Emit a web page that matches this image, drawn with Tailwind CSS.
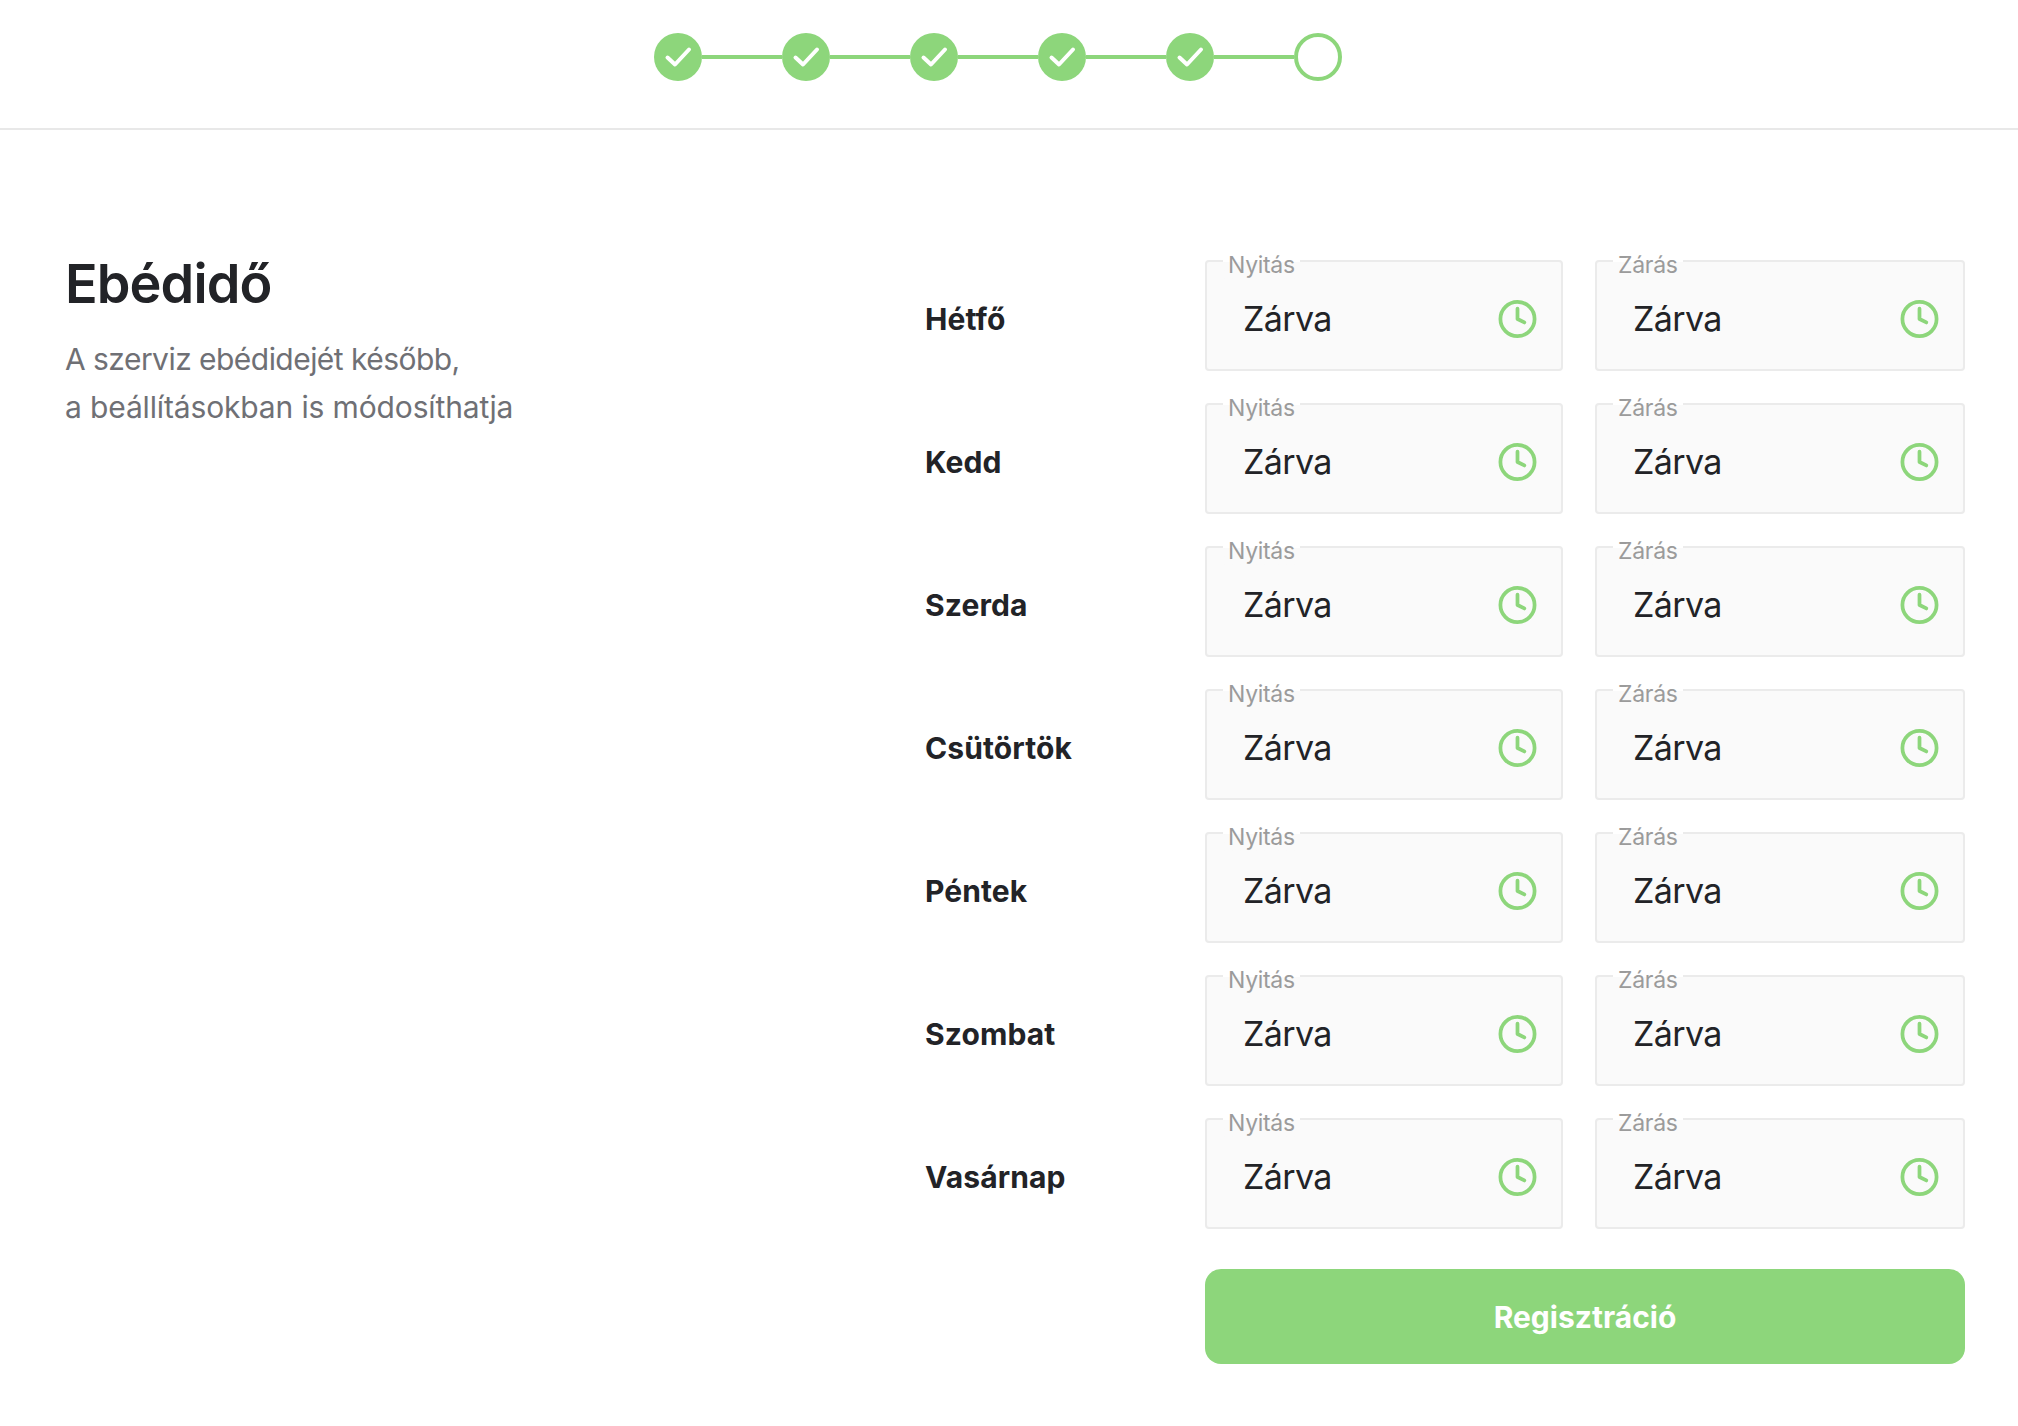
<!DOCTYPE html>
<html lang="hu">
<head>
  <meta charset="UTF-8">
  <title>Ebédidő</title>
  <meta name="viewport" content="width=device-width, initial-scale=1">
  <script src="https://cdn.jsdelivr.net/npm/@tailwindcss/browser@4"></script>
</head>
<body class="min-h-screen bg-white text-[#222327] font-[Inter,sans-serif]">
  <!-- stepper -->
  <header id="steps" class="h-[130px] pt-[33px] pr-[22px] border-b-2 border-[#e8e8e8] flex justify-center items-start"></header>

  <main class="flex justify-between pl-[65px] pr-[53px] pt-[130px]">
    <!-- left text -->
    <div>
      <h1 class="text-[54px] leading-[64px] font-semibold -tracking-[0.9px] -mt-[8px]">Ebédidő</h1>
      <p class="mt-[20px] text-[30px] leading-[47.5px] text-[#6f7075]">
        <span class="block -tracking-[0.54px]">A szerviz ebédidejét később,</span>
        <span class="block -tracking-[0.14px]">a beállításokban is módosíthatja</span>
      </p>
    </div>

    <!-- opening hours -->
    <div class="w-[1040px]">
      <div id="days" class="flex flex-col gap-[32px]"></div>
      <div class="flex mt-[40px]">
        <button class="ml-[280px] w-[760px] h-[95px] pt-[2px] rounded-[16px] bg-[#8dd67b] text-white text-[30px] font-bold">Regisztráció</button>
      </div>
    </div>
  </main>

  <script>
    const clock = `<svg class="absolute top-1/2 -translate-y-1/2 mt-[3px] right-[23px] w-[41px] h-[41px]" viewBox="0 0 24 24" fill="none" stroke="#8dd67b" stroke-width="2.2" stroke-linecap="round" stroke-linejoin="round"><circle cx="12" cy="12" r="10"/><polyline points="12 6 12 12 16 14"/></svg>`;

    function field(label, width) {
      return `
        <div class="relative ${width} h-[111px] shrink-0 rounded-[4px] border-2 border-[#ebebeb] bg-[#fafafa] flex items-center pl-[36px] pt-[7px]">
          <span class="absolute left-[16px] -top-[11px] px-[5px] text-[23px] leading-[28px] -tracking-[0.3px] text-[#9b9b9b] bg-linear-to-b from-white from-[11px] to-[#fafafa] to-[11px]">${label}</span>
          <span class="text-[34px] leading-[44px] -tracking-[0.6px]">Zárva</span>
          ${clock}
        </div>`;
    }

    const days = ['Hétfő', 'Kedd', 'Szerda', 'Csütörtök', 'Péntek', 'Szombat', 'Vasárnap'];
    document.getElementById('days').innerHTML = days.map(day => `
      <div class="flex items-center">
        <div class="w-[280px] shrink-0 pt-[6px] text-[30px] leading-[40px] font-bold tracking-[0.1px]">${day}</div>
        <div class="flex gap-[32px]">${field('Nyitás', 'w-[358px]')}${field('Zárás', 'w-[370px]')}</div>
      </div>`).join('');

    const done = `<div class="w-[48px] h-[48px] shrink-0 rounded-full bg-[#8dd67b] flex items-center justify-center"><svg class="w-[48px] h-[48px]" viewBox="0 0 48 48" fill="none" stroke="#fff" stroke-width="4" stroke-linecap="round" stroke-linejoin="round"><path d="M13.5 24.5L21 31.5L35 16.5"/></svg></div>`;
    const line = `<div class="w-[80px] h-[4px] mt-[22px] shrink-0 bg-[#8dd67b]"></div>`;
    const open = `<div class="w-[48px] h-[48px] shrink-0 rounded-full border-4 border-[#8dd67b] bg-white"></div>`;
    document.getElementById('steps').innerHTML = Array(5).fill(done + line).join('') + open;
  </script>
</body>
</html>
